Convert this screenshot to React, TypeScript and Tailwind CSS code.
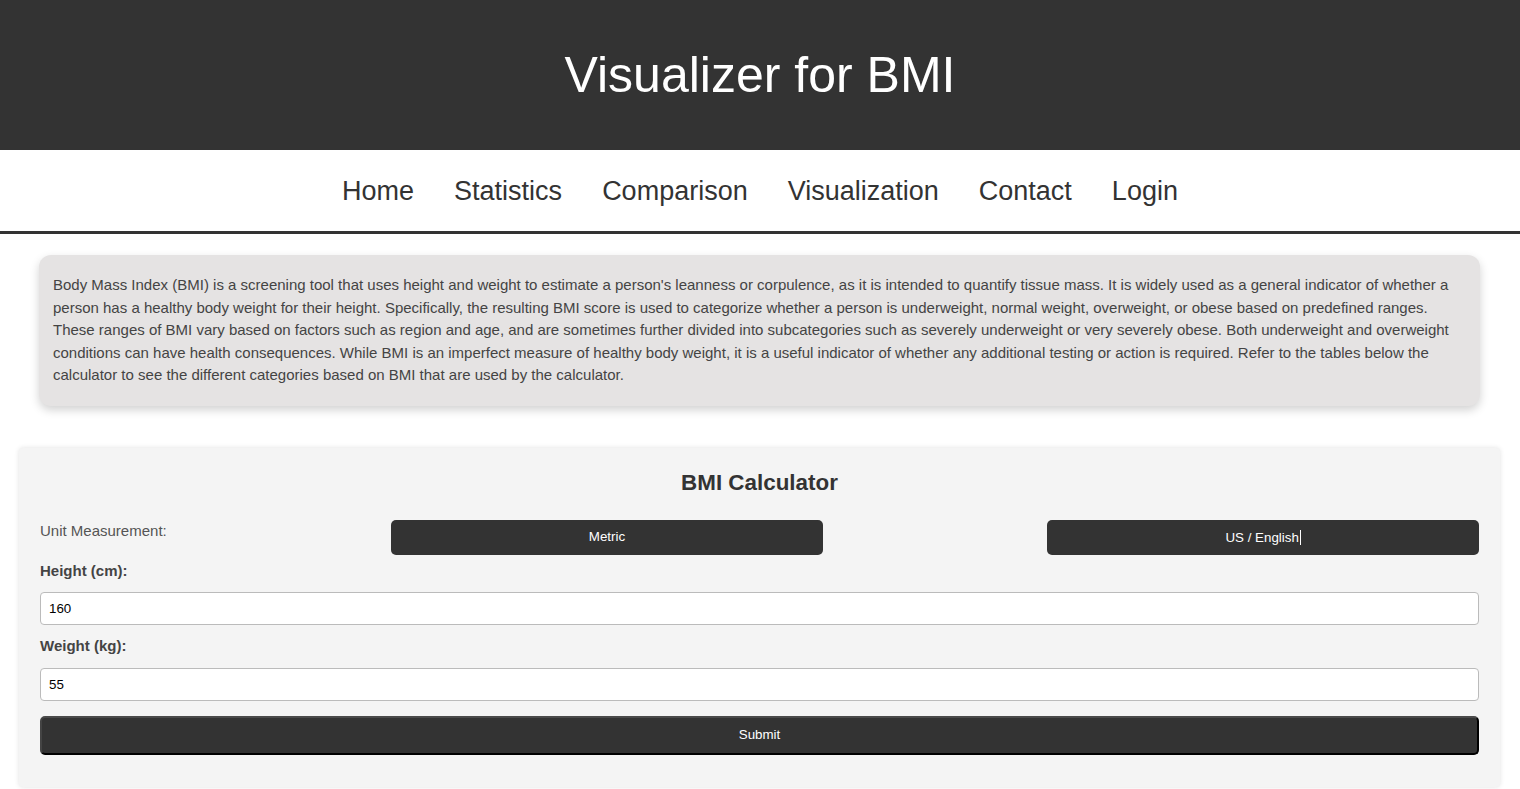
const navLinks = ["Home", "Statistics", "Comparison", "Visualization", "Contact", "Login"];

export default function App() {
  return (
    <div className="min-h-screen bg-white font-['Liberation_Sans',Arial,sans-serif] text-[#333]">
      {/* header */}
      <header className="flex h-[150px] items-center justify-center bg-[#333]">
        <h1 className="text-[50px] leading-none text-white">Visualizer for BMI</h1>
      </header>

      {/* nav */}
      <nav className="flex h-[84px] items-center justify-center border-b-[3px] border-[#333] pt-[2px]">
        <ul className="flex">
          {navLinks.map((link) => (
            <li key={link}>
              <a href="#" className="px-5 text-[27px] text-[#333]">
                {link}
              </a>
            </li>
          ))}
        </ul>
      </nav>

      <main>
        {/* intro */}
        <section className="mr-[40px] ml-[39px] mt-[21px] rounded-xl bg-[#e5e3e3] px-[14px] py-[19px] shadow-[0_4px_10px_rgba(0,0,0,0.18)]">
          <p className="text-[15px] leading-[22.5px] text-[#444]">
            Body Mass Index (BMI) is a screening tool that uses height and weight to estimate a person's leanness or
            corpulence, as it is intended to quantify tissue mass. It is widely used as a general indicator of whether a
            person has a healthy body weight for their height. Specifically, the resulting BMI score is used to
            categorize whether a person is underweight, normal weight, overweight, or obese based on predefined ranges.
            These ranges of BMI vary based on factors such as region and age, and are sometimes further divided into
            subcategories such as severely underweight or very severely obese. Both underweight and overweight
            conditions can have health consequences. While BMI is an imperfect measure of healthy body weight, it is a
            useful indicator of whether any additional testing or action is required. Refer to the tables below the
            calculator to see the different categories based on BMI that are used by the calculator.
          </p>
        </section>

        {/* calculator */}
        <section className="mr-[20px] ml-[19px] mt-[42px] mb-[3px] rounded-sm bg-[#f4f4f4] px-[21px] pt-5 pb-8 shadow-[0_0_5px_rgba(0,0,0,0.12)]">
          <h2 className="mb-[22px] text-center text-[22.4px] font-bold leading-[30px] text-[#333]">BMI Calculator</h2>

          <div className="mb-[7px] flex items-start justify-between">
            <span className="pt-[2px] text-[15px] leading-[18px] text-[#555]">Unit Measurement:</span>
            <button className="h-[35px] w-[30%] rounded-[5px] bg-[#333] text-[13.33px] text-white">Metric</button>
            <button className="h-[35px] w-[30%] rounded-[5px] bg-[#333] text-[13.33px] text-white">
              US / English<span className="ml-px inline-block h-[15px] w-px translate-y-[3px] bg-white" />
            </button>
          </div>

          <label className="block text-[15px] font-bold leading-[18px] text-[#444]">Height (cm):</label>
          <input
            defaultValue="160"
            className="mt-3 block h-[33px] w-full rounded-[4px] border border-[#bbb] bg-white px-2 text-[13.33px] text-black outline-none"
          />

          <label className="mt-[12px] block text-[15px] font-bold leading-[18px] text-[#444]">Weight (kg):</label>
          <input
            defaultValue="55"
            className="mt-[13px] block h-[33px] w-full rounded-[4px] border border-[#bbb] bg-white px-2 text-[13.33px] text-black outline-none"
          />

          <button className="mt-[15px] block h-[39px] w-full rounded-[5px] border-2 border-t-[#4a4a4a] border-l-[#444] border-r-black border-b-black bg-[#333] text-[13.33px] text-white">
            Submit
          </button>
        </section>
      </main>
    </div>
  );
}
